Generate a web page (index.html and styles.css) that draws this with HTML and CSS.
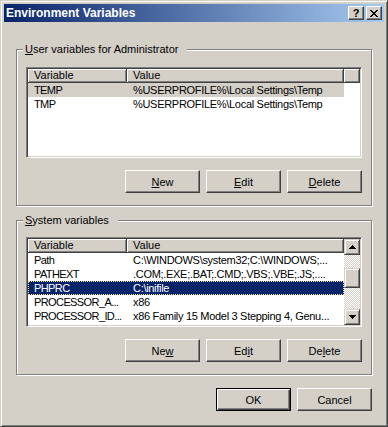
FILE: index.html
```html
<!DOCTYPE html>
<html lang="en">
<head>
    <meta charset="UTF-8">
    <title>Environment Variables</title>
    <link rel="stylesheet" href="styles.css">
</head>
<body>
    <div class="window">
        <div class="titlebar">
            <span class="title">Environment Variables</span>
            <span class="cap-btn help">?</span>
            <span class="cap-btn close">
                <svg width="8" height="7" viewBox="0 0 8 7"><path d="M0 0h2v1h-2zM6 0h2v1h-2zM1 1h2v1h-2zM5 1h2v1h-2zM2 2h4v1h-4zM3 3h2v1h-2zM2 4h4v1h-4zM1 5h2v1h-2zM5 5h2v1h-2zM0 6h2v1h-2zM6 6h2v1h-2z" fill="#000"/></svg>
            </span>
        </div>

        <div class="client">
            <fieldset class="group group-user">
                <legend><u>U</u>ser variables for Administrator</legend>
                <div class="listview lv-user">
                    <div class="lv-body">
                        <div class="lv-header">
                            <div class="hd col1">Variable</div>
                            <div class="hd col2">Value</div>
                            <div class="hd rest"></div>
                        </div>
                        <div class="row inactive">
                            <div class="cell col1">TEMP</div>
                            <div class="cell col2">%USERPROFILE%\Local Settings\Temp</div>
                        </div>
                        <div class="row">
                            <div class="cell col1">TMP</div>
                            <div class="cell col2">%USERPROFILE%\Local Settings\Temp</div>
                        </div>
                    </div>
                </div>
                <div class="btn-row">
                    <button class="btn"><u>N</u>ew</button>
                    <button class="btn"><u>E</u>dit</button>
                    <button class="btn"><u>D</u>elete</button>
                </div>
            </fieldset>

            <fieldset class="group group-system">
                <legend><u>S</u>ystem variables</legend>
                <div class="listview lv-system">
                    <div class="lv-body">
                        <div class="lv-header">
                            <div class="hd col1">Variable</div>
                            <div class="hd col2">Value</div>
                        </div>
                        <div class="row">
                            <div class="cell col1">Path</div>
                            <div class="cell col2">C:\WINDOWS\system32;C:\WINDOWS;...</div>
                        </div>
                        <div class="row">
                            <div class="cell col1">PATHEXT</div>
                            <div class="cell col2">.COM;.EXE;.BAT;.CMD;.VBS;.VBE;.JS;....</div>
                        </div>
                        <div class="row selected">
                            <div class="cell col1">PHPRC</div>
                            <div class="cell col2">C:\inifile</div>
                        </div>
                        <div class="row">
                            <div class="cell col1">PROCESSOR_A...</div>
                            <div class="cell col2">x86</div>
                        </div>
                        <div class="row">
                            <div class="cell col1">PROCESSOR_ID...</div>
                            <div class="cell col2">x86 Family 15 Model 3 Stepping 4, Genu...</div>
                        </div>
                    </div>
                    <div class="scrollbar">
                        <div class="sb-btn">
                            <svg width="7" height="4" viewBox="0 0 7 4"><path d="M3 0h1v1h-1zM2 1h3v1h-3zM1 2h5v1h-5zM0 3h7v1h-7z" fill="#000"/></svg>
                        </div>
                        <div class="sb-track">
                            <div class="sb-thumb"></div>
                        </div>
                        <div class="sb-btn">
                            <svg width="7" height="4" viewBox="0 0 7 4"><path d="M0 0h7v1h-7zM1 1h5v1h-5zM2 2h3v1h-3zM3 3h1v1h-1z" fill="#000"/></svg>
                        </div>
                    </div>
                </div>
                <div class="btn-row">
                    <button class="btn">Ne<u>w</u></button>
                    <button class="btn">Ed<u>i</u>t</button>
                    <button class="btn">De<u>l</u>ete</button>
                </div>
            </fieldset>

            <div class="dlg-buttons">
                <button class="btn default">OK</button>
                <button class="btn">Cancel</button>
            </div>
        </div>
    </div>
</body>
</html>
```

FILE: styles.css
```css
* {
    box-sizing: border-box;
}
body {
    margin: 0;
    font-family: "Liberation Sans", Arial, sans-serif;
    font-size: 11px;
    color: #000;
    background: #d4d0c8;
}
.window {
    width: 388px;
    height: 427px;
    padding: 3px;
    background: #d4d0c8;
    border: 1px solid;
    border-color: #d4d0c8 #404040 #404040 #d4d0c8;
    box-shadow: inset 1px 1px #fff, inset -1px -1px #808080;
}

/* title bar */
.titlebar {
    height: 18px;
    display: flex;
    align-items: center;
    padding: 0 2px;
    background: linear-gradient(to right, #0a246a, #a6caf0);
}
.title {
    flex: 1;
    color: #fff;
    font-weight: bold;
    font-size: 12px;
}
.cap-btn {
    width: 16px;
    height: 14px;
    display: flex;
    align-items: center;
    justify-content: center;
    background: #d4d0c8;
    border: 1px solid;
    border-color: #fff #404040 #404040 #fff;
    box-shadow: inset -1px -1px #808080;
    font-weight: bold;
    font-size: 11px;
    line-height: 12px;
}
.cap-btn.close {
    margin-left: 2px;
}

/* group boxes */
.client {
    padding: 21px 12px 0;
}
.group {
    margin: 0;
    padding: 11px 9px 12px;
    border: 1px solid #808080;
    box-shadow: inset 1px 1px #fff, 1px 1px #fff;
    min-width: 0;
}
.group legend {
    margin-left: -3px;
    padding: 0 9px 0 2px;
    line-height: 13px;
    background: #d4d0c8;
}
.group-system {
    margin-top: 8px;
    padding-top: 10px;
}

/* list views */
.listview {
    display: flex;
    height: 90px;
    padding: 1px;
    background: #fff;
    border: 1px solid;
    border-color: #808080 #fff #fff #808080;
    box-shadow: inset 1px 1px #404040, inset -1px -1px #d4d0c8;
}
.lv-user {
    height: 91px;
}
.lv-body {
    flex: 1;
    overflow: hidden;
}
.lv-header {
    display: flex;
    height: 14px;
}
.hd {
    background: #d4d0c8;
    padding-left: 6px;
    line-height: 12px;
    border-right: 1px solid #404040;
    border-bottom: 1px solid #404040;
    box-shadow: inset 1px 1px #fff, inset -1px -1px #808080;
    white-space: nowrap;
}
.col1 {
    width: 99px;
}
.col2 {
    width: 217px;
}
.rest {
    flex: 1;
}
.row {
    display: flex;
    width: 316px;
    height: 14px;
    line-height: 14px;
    letter-spacing: -0.3px;
}
.cell {
    padding-left: 6px;
    white-space: nowrap;
    overflow: hidden;
}
.cell.col1 {
    overflow: visible;
    letter-spacing: -0.6px;
}
.row.inactive {
    background: #d4d0c8;
}
.row.selected {
    background: #0a246a;
    color: #fff;
    outline: 1px dotted #f5db95;
    outline-offset: -1px;
}

/* scroll bar */
.scrollbar {
    width: 16px;
    display: flex;
    flex-direction: column;
}
.sb-btn,
.sb-thumb {
    width: 16px;
    height: 16px;
    display: flex;
    align-items: center;
    justify-content: center;
    background: #d4d0c8;
    border: 1px solid;
    border-color: #d4d0c8 #404040 #404040 #d4d0c8;
    box-shadow: inset 1px 1px #fff, inset -1px -1px #808080;
}
.sb-track {
    flex: 1;
    padding-top: 13px;
    background: repeating-conic-gradient(#fff 0 25%, #d4d0c8 0 50%) 0 0 / 2px 2px;
}
.sb-thumb {
    height: 20px;
}

/* buttons */
.btn-row,
.dlg-buttons {
    display: flex;
    justify-content: flex-end;
    gap: 6px;
    margin-top: 12px;
}
.dlg-buttons {
    margin-top: 13px;
}
.btn {
    width: 75px;
    height: 23px;
    padding: 0;
    font: inherit;
    color: #000;
    background: #d4d0c8;
    border: 1px solid;
    border-color: #fff #404040 #404040 #fff;
    box-shadow: inset -1px -1px #808080;
}
.btn.default {
    border-color: #000;
    box-shadow: inset 1px 1px #fff, inset -1px -1px #404040, inset -2px -2px #808080;
}
```
